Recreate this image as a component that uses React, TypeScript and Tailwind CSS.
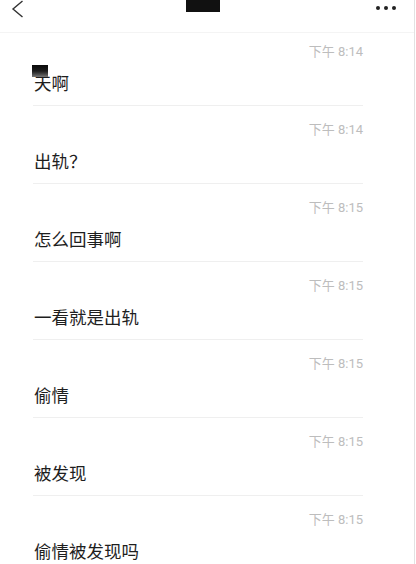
import React from "react";

const messages = [
  { time: "下午 8:14", text: "天啊" },
  { time: "下午 8:14", text: "出轨？" },
  { time: "下午 8:15", text: "怎么回事啊" },
  { time: "下午 8:15", text: "一看就是出轨" },
  { time: "下午 8:15", text: "偷情" },
  { time: "下午 8:15", text: "被发现" },
  { time: "下午 8:15", text: "偷情被发现吗" },
];

export default function App() {
  return (
    <div
      className="w-[416px] h-[564px] overflow-hidden bg-white"
      style={{ fontFamily: '"Roboto", "Noto Sans CJK SC", sans-serif' }}
    >
      <div className="w-[415px] h-full border-r border-[#e2e2e2]">
        {/* header */}
        <div className="relative h-[33px] flex items-start justify-between border-b border-[#f4f4f4]">
          <svg width="24" height="20" viewBox="0 0 24 20" className="ml-[8px]">
            <path d="M14.5 1 L5 9 L14.5 17" fill="none" stroke="#333" strokeWidth="1.4" />
          </svg>
          <div className="absolute left-[186px] top-0 w-[34px] h-[12px] bg-[#111]" />
          <div className="flex gap-[4px] mr-[18px] mt-[6px]">
            <span className="w-[4px] h-[4px] rounded-full bg-[#222]" />
            <span className="w-[4px] h-[4px] rounded-full bg-[#222]" />
            <span className="w-[4px] h-[4px] rounded-full bg-[#222]" />
          </div>
        </div>

        {/* message list */}
        <div className="pl-[33px] pr-[51px]">
          {messages.map((m, i) => (
            <div
              key={i}
              className={`flex flex-col border-b border-[#efefef] pb-[9px] ${i === 0 ? "pt-[10px]" : "pt-[15px]"}`}
            >
              <div className="text-right text-[13px] leading-[18px] text-[#bdbdbd]">{m.time}</div>
              <div className="relative mt-[11px] text-[17.5px] leading-[24px] text-[#1e1e1e] pl-[1px]">
                {m.text}
                {i === 0 && (
                  <span className="absolute left-[-1px] top-[-7px] w-[16px] h-[12px] bg-gradient-to-b from-[#0a0a0a] via-[#1c1c1c] to-[#777]" />
                )}
              </div>
            </div>
          ))}
        </div>
      </div>
    </div>
  );
}
